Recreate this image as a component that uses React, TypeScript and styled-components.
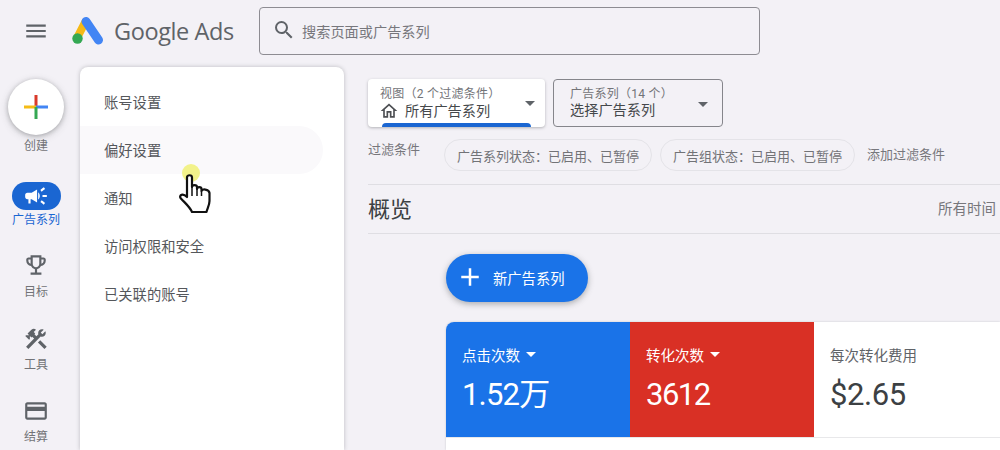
import React from "react";
import styled, { createGlobalStyle } from "styled-components";
import { MdMenu, MdSearch, MdCampaign, MdOutlineEmojiEvents, MdConstruction, MdCreditCard, MdOutlineHome, MdArrowDropDown, MdAdd } from "react-icons/md";

const Global = createGlobalStyle`
  html, body { margin: 0; padding: 0; background: #f3f1f6; }
  * { box-sizing: border-box; }
  body { font-family: Roboto, "Noto Sans CJK SC", sans-serif; color: #5f6368; }
`;

const Page = styled.div`
  position: relative;
  width: 1000px;
  height: 450px;
  overflow: hidden;
  background: #f3f1f6;
`;
const Header = styled.header`
  display: flex;
  align-items: center;
  height: 62px;
`;
const MenuButton = styled.div`
  width: 72px;
  display: flex;
  justify-content: center;
  color: #5f6368;
  font-size: 26px;
  line-height: 0;
`;
const Brand = styled.div`
  display: flex;
  align-items: center;
  width: 187px;
`;
const BrandName = styled.span`
  font-family: "Open Sans", sans-serif;
  font-size: 23.5px;
  letter-spacing: -0.4px;
  color: #5f6368;
  margin-left: 10px;
  white-space: nowrap;
`;
const Search = styled.div`
  width: 501px;
  height: 48px;
  margin-top: -1px;
  border: 1px solid #8d8c92;
  border-radius: 4px;
  display: flex;
  align-items: center;
  padding-left: 12px;
  gap: 6px;
  font-size: 14.2px;
  color: #77777c;
  svg { font-size: 24px; color: #5f6368; margin-top: -2px; }
`;
const Body = styled.div`
  display: flex;
  height: 388px;
`;
const Rail = styled.nav`
  width: 72px;
  flex: none;
  display: flex;
  flex-direction: column;
  align-items: center;
  padding-top: 17px;
`;
const Fab = styled.div`
  width: 56px;
  height: 56px;
  border-radius: 50%;
  background: #fff;
  box-shadow: 0 1px 4px rgba(60,64,67,.3), 0 2px 8px rgba(60,64,67,.2);
  display: flex;
  align-items: center;
  justify-content: center;
`;
const RailItem = styled.div<{ $top: number }>`
  display: flex;
  flex-direction: column;
  align-items: center;
  margin-top: ${(p) => p.$top}px;
`;
const RailIcon = styled.div<{ $active?: boolean }>`
  width: 49px;
  height: 28px;
  border-radius: 14px;
  display: flex;
  align-items: center;
  justify-content: center;
  font-size: 26px;
  background: ${(p) => (p.$active ? "#1a66d2" : "transparent")};
  color: ${(p) => (p.$active ? "#fff" : "#5f6368")};
`;
const RailLabel = styled.span<{ $active?: boolean; $gap: number }>`
  font-size: 12px;
  line-height: 16px;
  margin-top: ${(p) => p.$gap}px;
  color: ${(p) => (p.$active ? "#1a66d2" : "#727377")};
`;
const Panel = styled.aside`
  width: 264px;
  flex: none;
  margin-left: 8px;
  margin-top: 5px;
  padding-top: 11px;
  background: #fff;
  border-radius: 8px 8px 0 0;
  box-shadow: 0 0 4px rgba(60,64,67,.3);
`;
const PanelItem = styled.div<{ $hover?: boolean }>`
  width: 243px;
  height: 48px;
  padding: 0 0 2px 24px;
  display: flex;
  align-items: center;
  font-size: 14.3px;
  color: #55575b;
  border-radius: 0 24px 24px 0;
  background: ${(p) => (p.$hover ? "#faf9fb" : "transparent")};
`;
const Main = styled.main`
  flex: 1;
  min-width: 0;
  margin-left: 24px;
  padding-top: 17px;
`;
const Pickers = styled.div`
  display: flex;
  gap: 8px;
`;
const Picker = styled.div<{ $raised?: boolean; $w: number }>`
  position: relative;
  width: ${(p) => p.$w}px;
  height: 48px;
  border-radius: 4px;
  padding: ${(p) => (p.$raised ? 8 : 7)}px 12px 0 ${(p) => (p.$raised ? 12 : 16)}px;
  background: ${(p) => (p.$raised ? "#fff" : "transparent")};
  border: ${(p) => (p.$raised ? "none" : "1px solid #85858b")};
  box-shadow: ${(p) => (p.$raised ? "0 1px 3px rgba(60,64,67,.35)" : "none")};
  overflow: hidden;
`;
const PickerLabel = styled.div`
  font-size: 12px;
  line-height: 14px;
  letter-spacing: 0.25px;
  color: #727377;
  white-space: nowrap;
`;
const PickerValue = styled.div`
  display: flex;
  align-items: center;
  gap: 6px;
  font-size: 14.2px;
  line-height: 19px;
  color: #45484b;
  white-space: nowrap;
  svg { font-size: 20px; color: #4d4f53; margin-left: -1px; }
`;
const PickerArrow = styled.div<{ $right: number }>`
  position: absolute;
  right: ${(p) => p.$right}px;
  top: 12px;
  font-size: 24px;
  line-height: 0;
  color: #5f6368;
`;
const ActiveBar = styled.div`
  position: absolute;
  left: 14px;
  right: 14px;
  bottom: 0;
  height: 4px;
  background: #1a66d2;
  border-radius: 4px 4px 0 0;
`;
const Filters = styled.div`
  display: flex;
  align-items: flex-start;
  height: 46px;
  margin-top: 12px;
  border-bottom: 1px solid #dfdee3;
  font-size: 13px;
  white-space: nowrap;
`;
const FilterLabel = styled.span`
  width: 76px;
  line-height: 22px;
  color: #77777c;
`;
const Chip = styled.span<{ $w: number }>`
  width: ${(p) => p.$w}px;
  height: 32px;
  margin-right: 8px;
  border: 1px solid #e4e3e8;
  border-radius: 16px;
  display: flex;
  align-items: center;
  justify-content: center;
  color: #727377;
`;
const AddFilter = styled.span`
  margin-left: 4px;
  line-height: 32px;
  color: #77777c;
`;
const Overview = styled.div`
  display: flex;
  align-items: center;
  justify-content: space-between;
  height: 49px;
  border-bottom: 1px solid #dfdee3;
  padding: 0 4px 4px 0;
`;
const Title = styled.h1`
  margin: 0;
  font-size: 22px;
  font-weight: 400;
  color: #3c4043;
`;
const Range = styled.span`
  font-size: 14.5px;
  color: #77777c;
`;
const Content = styled.div`
  padding: 20px 0 0 78px;
`;
const NewButton = styled.div`
  width: 142px;
  height: 48px;
  border-radius: 24px;
  background: #1a73e8;
  color: #fff;
  display: flex;
  align-items: center;
  padding: 0 0 2px 9px;
  gap: 8px;
  font-size: 14.3px;
  box-shadow: 0 2px 6px rgba(60,64,67,.4);
  svg { font-size: 30px; }
`;
const Card = styled.section`
  margin-top: 20px;
  height: 128px;
  background: #fff;
  border-radius: 8px 0 0 0;
  overflow: hidden;
  box-shadow: 0 0 2px rgba(60,64,67,.25);
`;
const Tiles = styled.div`
  display: flex;
  height: 116px;
  border-bottom: 1px solid #e8e8ea;
`;
const Tile = styled.div<{ $bg: string; $fg: string; $w: number }>`
  width: ${(p) => p.$w}px;
  background: ${(p) => p.$bg};
  color: ${(p) => p.$fg};
  padding: 22px 0 0 16px;
`;
const TileLabel = styled.div`
  display: flex;
  align-items: center;
  height: 20px;
  font-size: 14.5px;
  svg { font-size: 24px; margin-left: -1px; }
`;
const TileValue = styled.div<{ $dark?: boolean; $track: number }>`
  font-size: 31px;
  line-height: 40px;
  margin-top: 11px;
  letter-spacing: ${(p) => p.$track}px;
  color: ${(p) => (p.$dark ? "#3c4043" : "#fff")};
`;
const Highlight = styled.div`
  position: absolute;
  left: 182px;
  top: 164px;
  width: 18px;
  height: 18px;
  border-radius: 50%;
  background: #f2f28a;
`;
const Cursor = styled.svg`
  position: absolute;
  left: 179px;
  top: 174px;
`;

const Plus = () => (
  <svg width="24" height="24" viewBox="0 0 24 24">
    <rect x="10.5" y="0" width="3" height="12" fill="#d93a2b" />
    <rect x="0" y="10.5" width="12" height="3" fill="#f5bc16" />
    <rect x="12" y="10.5" width="12" height="3" fill="#4285f4" />
    <rect x="10.5" y="12" width="3" height="12" fill="#34a853" />
  </svg>
);

const Logo = () => (
  <svg width="32" height="30" viewBox="0 0 32 30">
    <path d="M13 6.5 L5.5 21" stroke="#f5b916" strokeWidth="8" strokeLinecap="round" />
    <path d="M14 5.5 L26.5 24" stroke="#4285f4" strokeWidth="9" strokeLinecap="round" />
    <circle cx="5.5" cy="22.5" r="5.2" fill="#34a853" />
  </svg>
);

const Hand = () => (
  <Cursor width="33" height="40" viewBox="0 0 33 40">
    <path
      d="M8 3.5 C8 .5 13 .5 13 3.5 V13 C13 10.5 18 10.5 18 13 V15 C18 12.5 22.5 12.5 22.5 15 V17 C22.5 14.5 30 15 30.5 19 V27 C30.5 31 28.5 34 27.5 38 H13 C11 33 6 29 1.5 24 C0 21.5 3.5 18.5 8 23 Z"
      fill="#fff"
      stroke="#111"
      strokeWidth="2.2"
      strokeLinejoin="round"
    />
    <path d="M13 13 V22 M18 15 V22 M22.5 17 V22" stroke="#111" strokeWidth="1.5" fill="none" />
  </Cursor>
);

export default function App() {
  return (
    <Page>
      <Global />
      <Header>
        <MenuButton><MdMenu /></MenuButton>
        <Brand>
          <Logo />
          <BrandName>Google Ads</BrandName>
        </Brand>
        <Search>
          <MdSearch />
          <span>搜索页面或广告系列</span>
        </Search>
      </Header>
      <Body>
        <Rail>
          <Fab><Plus /></Fab>
          <RailLabel $gap={3}>创建</RailLabel>
          <RailItem $top={28}>
            <RailIcon $active><MdCampaign /></RailIcon>
            <RailLabel $active $gap={2}>广告系列</RailLabel>
          </RailItem>
          <RailItem $top={23}>
            <RailIcon><MdOutlineEmojiEvents /></RailIcon>
            <RailLabel $gap={5}>目标</RailLabel>
          </RailItem>
          <RailItem $top={25}>
            <RailIcon><MdConstruction /></RailIcon>
            <RailLabel $gap={4}>工具</RailLabel>
          </RailItem>
          <RailItem $top={24}>
            <RailIcon><MdCreditCard /></RailIcon>
            <RailLabel $gap={4}>结算</RailLabel>
          </RailItem>
        </Rail>
        <Panel>
          <PanelItem>账号设置</PanelItem>
          <PanelItem $hover>偏好设置</PanelItem>
          <PanelItem>通知</PanelItem>
          <PanelItem>访问权限和安全</PanelItem>
          <PanelItem>已关联的账号</PanelItem>
        </Panel>
        <Main>
          <Pickers>
            <Picker $raised $w={177}>
              <PickerLabel>视图（2 个过滤条件）</PickerLabel>
              <PickerValue><MdOutlineHome />所有广告系列</PickerValue>
              <PickerArrow $right={3}><MdArrowDropDown /></PickerArrow>
              <ActiveBar />
            </Picker>
            <Picker $w={170}>
              <PickerLabel>广告系列（14 个）</PickerLabel>
              <PickerValue>选择广告系列</PickerValue>
              <PickerArrow $right={7}><MdArrowDropDown /></PickerArrow>
            </Picker>
          </Pickers>
          <Filters>
            <FilterLabel>过滤条件</FilterLabel>
            <Chip $w={208}>广告系列状态：已启用、已暂停</Chip>
            <Chip $w={195}>广告组状态：已启用、已暂停</Chip>
            <AddFilter>添加过滤条件</AddFilter>
          </Filters>
          <Overview>
            <Title>概览</Title>
            <Range>所有时间</Range>
          </Overview>
          <Content>
            <NewButton><MdAdd />新广告系列</NewButton>
            <Card>
              <Tiles>
                <Tile $bg="#1a73e8" $fg="#fff" $w={184}>
                  <TileLabel>点击次数<MdArrowDropDown /></TileLabel>
                  <TileValue $track={-0.8}>1.52万</TileValue>
                </Tile>
                <Tile $bg="#d93025" $fg="#fff" $w={184}>
                  <TileLabel>转化次数<MdArrowDropDown /></TileLabel>
                  <TileValue $track={-1.5}>3612</TileValue>
                </Tile>
                <Tile $bg="#fff" $fg="#5f6368" $w={186}>
                  <TileLabel>每次转化费用</TileLabel>
                  <TileValue $dark $track={-0.4}>$2.65</TileValue>
                </Tile>
              </Tiles>
            </Card>
          </Content>
        </Main>
      </Body>
      <Highlight />
      <Hand />
    </Page>
  );
}
